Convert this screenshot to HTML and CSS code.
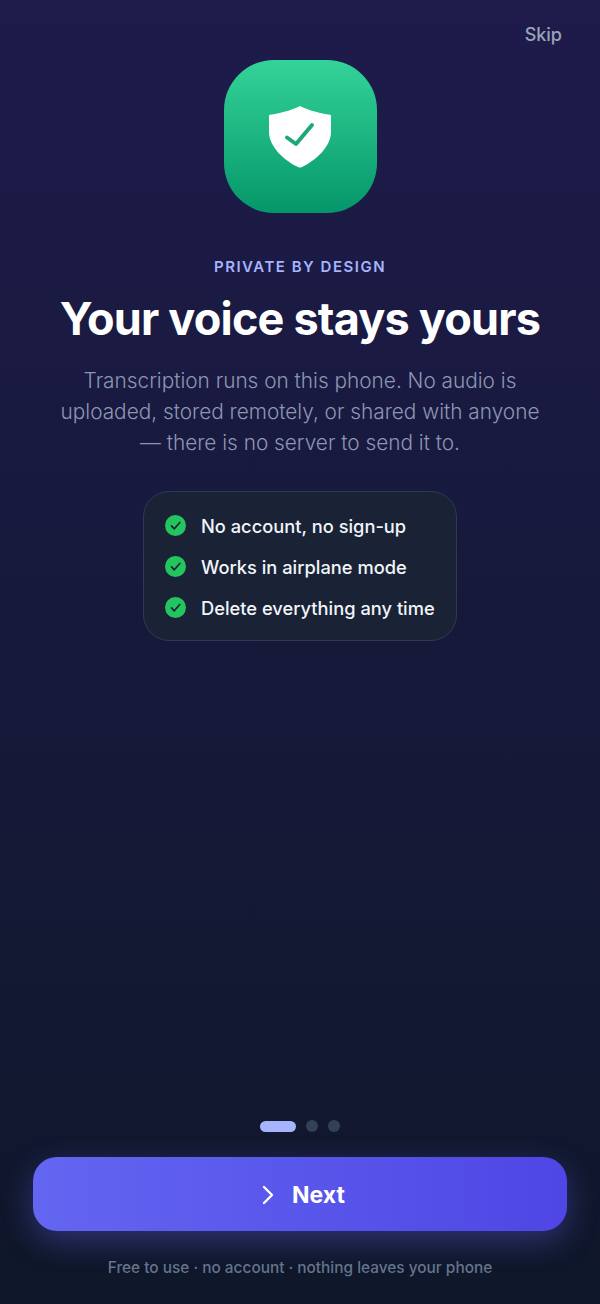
FILE: index.html
```html
<!DOCTYPE html>
<html lang="en">
<head>
    <meta charset="UTF-8">
    <title>Private by design</title>
    <link rel="stylesheet" href="styles.css">
</head>
<body>
    <div class="screen">
        <div class="topbar">
            <span class="skip">Skip</span>
        </div>

        <div class="appIcon">
            <svg width="64" height="62" viewBox="0 0 64 62">
                <path d="M32 0 C38 3 47 6.500 63 9 V26 C63 41 47 55 34 61 Q32 62 30 61 C17 55 1 41 1 26 V9 C17 6.500 26 3 32 0 Z" fill="#fff"/>
                <path d="M19 31.500 L28 38 L44 19" fill="none" stroke="#1fa67c" stroke-width="4" stroke-linecap="round" stroke-linejoin="round"/>
            </svg>
        </div>

        <p class="kicker">PRIVATE BY DESIGN</p>
        <h1>Your voice stays yours</h1>
        <p class="intro">Transcription runs on this phone. No audio is uploaded, stored remotely, or shared with anyone — there is no server to send it to.</p>

        <ul class="checks">
            <li>
                <svg width="21" height="21" viewBox="0 0 21 21"><circle cx="10.500" cy="10.500" r="10.500" fill="#22c55e"/><path d="M6.500 10.800 L9.300 13.800 L14.800 7.500" fill="none" stroke="#1a2236" stroke-width="1.700" stroke-linecap="round" stroke-linejoin="round"/></svg>
                No account, no sign-up
            </li>
            <li>
                <svg width="21" height="21" viewBox="0 0 21 21"><circle cx="10.500" cy="10.500" r="10.500" fill="#22c55e"/><path d="M6.500 10.800 L9.300 13.800 L14.800 7.500" fill="none" stroke="#1a2236" stroke-width="1.700" stroke-linecap="round" stroke-linejoin="round"/></svg>
                Works in airplane mode
            </li>
            <li>
                <svg width="21" height="21" viewBox="0 0 21 21"><circle cx="10.500" cy="10.500" r="10.500" fill="#22c55e"/><path d="M6.500 10.800 L9.300 13.800 L14.800 7.500" fill="none" stroke="#1a2236" stroke-width="1.700" stroke-linecap="round" stroke-linejoin="round"/></svg>
                Delete everything any time
            </li>
        </ul>

        <div class="spacer"></div>

        <div class="dots">
            <span class="dot active"></span>
            <span class="dot"></span>
            <span class="dot"></span>
        </div>

        <button class="next" type="button">
            <svg width="14" height="20" viewBox="0 0 14 20"><path d="M3 2 L11 10 L3 18" fill="none" stroke="#fff" stroke-width="2.400" stroke-linecap="round" stroke-linejoin="round"/></svg>
            Next
        </button>

        <p class="note">Free to use · no account · nothing leaves your phone</p>
    </div>
</body>
</html>
```

FILE: styles.css
```css
* {
    margin: 0;
    padding: 0;
    box-sizing: border-box;
}

html, body {
    height: 100%;
}

body {
    background-color: #0f172a;
    font-family: Inter, "Noto Sans", sans-serif;
}

.screen {
    height: 1304px;
    display: flex;
    flex-direction: column;
    align-items: center;
    padding: 0 33px;
    background: linear-gradient(180deg, #1e1b4b 0%, #0f172a 100%);
    overflow: hidden;
}

.topbar {
    width: 100%;
    height: 60px;
    padding: 22px 5px 0 0;
    display: flex;
    justify-content: flex-end;
}

.skip {
    color: #9aa3bb;
    font-size: 18px;
    line-height: 26px;
    font-weight: 500;
}

.appIcon {
    width: 153px;
    height: 153px;
    flex-shrink: 0;
    border-radius: 50px;
    background: linear-gradient(180deg, #34d399 0%, #059669 100%);
    display: flex;
    align-items: center;
    justify-content: center;
}

.kicker {
    margin-top: 44px;
    color: #a5b4fc;
    font-size: 15px;
    line-height: 20px;
    font-weight: 600;
    letter-spacing: 1.500px;
}

h1 {
    margin-top: 14px;
    color: #fff;
    font-size: 45px;
    line-height: 56px;
    font-weight: 700;
    letter-spacing: -0.800px;
    white-space: nowrap;
}

.intro {
    margin-top: 18px;
    width: 490px;
    color: #8d96b2;
    font-size: 20.800px;
    line-height: 31px;
    font-weight: 300;
    text-align: center;
}

.checks {
    margin-top: 33px;
    list-style: none;
    width: 314px;
    height: 150px;
    padding: 18px 15px 0 21px;
    background-color: #1a2236;
    border: 1px solid #303952;
    border-radius: 26px;
    display: flex;
    flex-direction: column;
    gap: 10px;
}

.checks li {
    display: flex;
    align-items: center;
    gap: 15px;
    height: 31px;
    color: #f1f5f9;
    font-size: 18.300px;
    font-weight: 500;
    white-space: nowrap;
}

.spacer {
    flex: 1;
}

.dots {
    display: flex;
    align-items: center;
    gap: 10px;
}

.dot {
    width: 12px;
    height: 12px;
    border-radius: 50%;
    background-color: #334155;
}

.dot.active {
    width: 36px;
    height: 11px;
    border-radius: 6px;
    background-color: #a5b4fc;
}

.next {
    margin-top: 25px;
    width: 534px;
    height: 74px;
    flex-shrink: 0;
    border: none;
    border-radius: 24px;
    padding: 2px 0 0 6px;
    background: linear-gradient(90deg, #6366f1 0%, #4f46e5 100%);
    box-shadow: 0 10px 30px rgba(99, 102, 241, 0.35);
    color: #fff;
    font-family: inherit;
    font-size: 23px;
    font-weight: 700;
    display: flex;
    align-items: center;
    justify-content: center;
    gap: 17px;
}

.note {
    margin-top: 25px;
    margin-bottom: 24px;
    color: #64748b;
    font-size: 15.400px;
    line-height: 24px;
    font-weight: 500;
}
```
